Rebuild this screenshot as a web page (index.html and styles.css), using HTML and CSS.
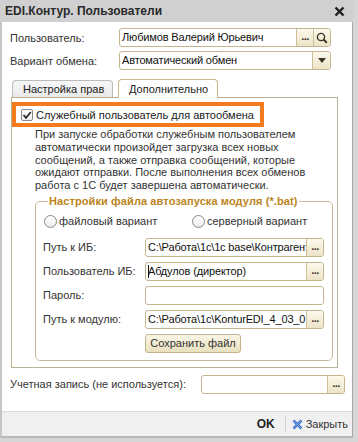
FILE: index.html
```html
<!DOCTYPE html>
<html lang="ru">
<head>
    <meta charset="UTF-8">
    <title>EDI.Контур. Пользователи</title>
    <link rel="stylesheet" href="styles.css">
</head>
<body>
    <div class="window">
        <div class="titlebar">
            <span class="title">EDI.Контур. Пользователи</span>
            <svg class="close" width="11" height="11" viewBox="0 0 11 11">
                <path d="M1.5 1.5 L9.5 9.5 M9.5 1.5 L1.5 9.5" stroke="#1e1e1e" stroke-width="2.4"/>
            </svg>
        </div>

        <div class="content">
            <div class="form-row">
                <span class="label">Пользователь:</span>
                <div class="field main-field">
                    <span class="value">Любимов Валерий Юрьевич</span>
                    <span class="btn-dots">...</span>
                    <span class="btn-icon">
                        <svg width="12" height="12" viewBox="0 0 12 12">
                            <circle cx="5" cy="5" r="3.6" fill="none" stroke="#3b3325" stroke-width="1.4"/>
                            <path d="M7.6 7.6 L10.8 10.8" stroke="#3b3325" stroke-width="2"/>
                        </svg>
                    </span>
                </div>
            </div>
            <div class="form-row">
                <span class="label">Вариант обмена:</span>
                <div class="field main-field">
                    <span class="value">Автоматический обмен</span>
                    <span class="btn-arrow">
                        <svg width="8" height="5" viewBox="0 0 8 5"><path d="M0 0 H8 L4 5 Z" fill="#3b3325"/></svg>
                    </span>
                </div>
            </div>

            <div class="tabs">
                <div class="tab-head">
                    <span class="tab">Настройка прав</span>
                    <span class="tab active">Дополнительно</span>
                </div>
                <div class="tab-panel">
                    <div class="highlight">
                        <span class="checkbox">
                            <svg width="10" height="10" viewBox="0 0 10 10">
                                <path d="M1.5 5 L4 7.8 L8.8 2" fill="none" stroke="#2d2d2d" stroke-width="1.8"/>
                            </svg>
                        </span>
                        Служебный пользователь для автообмена
                    </div>
                    <p class="note">
                        При запуске обработки служебным пользователем<br>
                        автоматически произойдет загрузка всех новых<br>
                        сообщений, а также отправка сообщений, которые<br>
                        ожидают отправки. После выполнения всех обменов<br>
                        работа с 1С будет завершена автоматически.
                    </p>

                    <fieldset class="group">
                        <legend>Настройки файла автозапуска модуля (*.bat)</legend>
                        <div class="radios">
                            <span class="radio-item"><span class="radio"></span>файловый вариант</span>
                            <span class="radio-item"><span class="radio"></span>серверный вариант</span>
                        </div>
                        <div class="group-row">
                            <span class="group-label">Путь к ИБ:</span>
                            <div class="field group-field">
                                <span class="value">C:\Работа\1c\1c base\Контрагенты</span>
                                <span class="btn-dots">...</span>
                            </div>
                        </div>
                        <div class="group-row">
                            <span class="group-label">Пользователь ИБ:</span>
                            <div class="field group-field">
                                <span class="value"><span class="caret"></span>Абдулов (директор)</span>
                                <span class="btn-dots">...</span>
                            </div>
                        </div>
                        <div class="group-row">
                            <span class="group-label">Пароль:</span>
                            <div class="field group-field">
                                <span class="value"></span>
                            </div>
                        </div>
                        <div class="group-row">
                            <span class="group-label">Путь к модулю:</span>
                            <div class="field group-field">
                                <span class="value">C:\Работа\1c\KonturEDI_4_03_0</span>
                                <span class="btn-dots">...</span>
                            </div>
                        </div>
                        <div class="group-row">
                            <span class="group-label"></span>
                            <span class="button">Сохранить файл</span>
                        </div>
                    </fieldset>
                </div>
            </div>

            <div class="form-row account">
                <span class="label account-label">Учетная запись (не используется):</span>
                <div class="field account-field">
                    <span class="value"></span>
                    <span class="btn-dots">...</span>
                </div>
            </div>
        </div>

        <div class="footer">
            <span class="ok">OK</span>
            <span class="sep"></span>
            <span class="close-btn">
                <svg width="11" height="11" viewBox="0 0 11 11">
                    <path d="M1.5 1.5 L9.5 9.5 M9.5 1.5 L1.5 9.5" stroke="#3d72c8" stroke-width="2.6"/>
                    <path d="M1.5 1.5 L9.5 9.5 M9.5 1.5 L1.5 9.5" stroke="#8fb4ec" stroke-width="0.8"/>
                </svg>
                Закрыть
            </span>
        </div>
    </div>
</body>
</html>
```

FILE: styles.css
```css
body {
    margin: 0;
    background: #d6d6d6;
    font-family: "Liberation Sans", Arial, sans-serif;
    font-size: 11px;
    color: #333;
}
.window {
    width: 350px;
    height: 436px;
    background: white;
    border-left: 2px solid #c6c6c6;
    border-right: 1px solid #a9a9a9;
    border-bottom: 2px solid #b8b8b8;
    display: flex;
    flex-direction: column;
}
.titlebar {
    height: 22px;
    background: #d0d0d0;
    display: flex;
    align-items: center;
    justify-content: space-between;
    padding: 0 8px 0 5px;
    margin-left: -2px;
    margin-right: -1px;
}
.title {
    font-weight: bold;
    font-size: 12px;
    color: #2a2a2a;
}
.content {
    flex: 1;
    padding: 6px 7px 0 8px;
}
.form-row {
    display: flex;
    align-items: center;
    height: 19px;
    margin-bottom: 4px;
}
.label {
    width: 109px;
    flex-shrink: 0;
}
.field {
    display: flex;
    height: 19px;
    box-sizing: border-box;
    border: 1px solid #c3b68f;
    border-radius: 3px;
    background: white;
    overflow: hidden;
}
.main-field {
    width: 212px;
}
.value {
    flex: 1;
    min-width: 0;
    padding-left: 2px;
    line-height: 17px;
    color: #111;
    letter-spacing: -0.15px;
    white-space: nowrap;
    overflow: hidden;
    text-overflow: clip;
}
.caret {
    display: inline-block;
    width: 1px;
    height: 13px;
    background: #111;
    vertical-align: -3px;
    margin-right: -1px;
}
.btn-dots, .btn-icon, .btn-arrow {
    width: 16px;
    flex-shrink: 0;
    background: linear-gradient(#fcf9ec, #ece4c6);
    border-left: 1px solid #cdbf96;
    display: flex;
    justify-content: center;
}
.btn-dots {
    font-weight: bold;
    line-height: 15px;
    color: #3b3325;
    letter-spacing: -0.5px;
}
.btn-icon, .btn-arrow {
    align-items: center;
}
.btn-arrow {
    width: 17px;
}
.tabs {
    margin: 10px 7px 0 1px;
}
.tab-head {
    display: flex;
    height: 17px;
    align-items: flex-end;
    padding-left: 1px;
    gap: 5px;
}
.tab {
    height: 17px;
    box-sizing: border-box;
    padding: 2px 0 0 10px;
    width: 101px;
    border: 1px solid #bcbcbc;
    border-bottom: none;
    border-radius: 4px 4px 0 0;
    background: linear-gradient(#f7f7f7, #e9e9e9);
    color: #222;
}
.tab.active {
    width: 100px;
    height: 19px;
    margin-bottom: -1px;
    background: white;
    border-color: #c7b98c;
    padding-top: 3px;
    position: relative;
}
.tab-panel {
    border: 1px solid #bab295;
    padding: 4px 4px 6px 0;
}
.highlight {
    width: 252px;
    height: 25px;
    box-sizing: border-box;
    border: 4px solid #f47a20;
    display: flex;
    align-items: center;
    padding-left: 5px;
    gap: 3px;
    color: #222;
}
.checkbox {
    width: 12px;
    height: 12px;
    box-sizing: border-box;
    border: 1px solid #8a8a8a;
    border-radius: 2px;
    background: linear-gradient(#ffffff, #eeeeee);
    display: flex;
    align-items: center;
    justify-content: center;
}
.note {
    margin: 1px 0 0 23px;
    line-height: 12.8px;
    color: #333;
}
.group {
    margin: 3px 0 0 23px;
    padding: 7px 8px 7px 7px;
    border: 1px solid #c9bd98;
    border-radius: 5px;
    min-width: 0;
}
.group legend {
    padding: 0 1px;
    margin-left: 5px;
    font-weight: bold;
    color: #bb8420;
    line-height: 13px;
    letter-spacing: 0.1px;
}
.radios {
    display: grid;
    grid-template-columns: 148px 1fr;
    height: 13px;
    margin-bottom: 10px;
    padding-left: 1px;
}
.radio-item {
    display: flex;
    align-items: center;
    gap: 2px;
}
.radio {
    width: 13px;
    height: 13px;
    box-sizing: border-box;
    border: 1px solid #8a8a8a;
    border-radius: 50%;
    background: linear-gradient(#ffffff, #ececec);
}
.group-row {
    display: flex;
    align-items: center;
    height: 19px;
    margin-top: 5px;
}
.group-row:first-of-type {
    margin-top: 0;
}
.group-label {
    width: 102px;
    flex-shrink: 0;
}
.group-field {
    width: 185px;
}
.button {
    width: 96px;
    height: 19px;
    box-sizing: border-box;
    border: 1px solid #c1b48c;
    border-radius: 3px;
    background: linear-gradient(#faf6e6, #e9e0bf);
    text-align: center;
    line-height: 17px;
    color: #333;
}
.account {
    margin-top: 7px;
}
.account-label {
    width: 191px;
}
.account-field {
    width: 144px;
}
.footer {
    height: 24px;
    background: #f0f0f0;
    border-top: 1px solid #dcdcdc;
    display: flex;
    align-items: center;
    justify-content: flex-end;
    padding-right: 4px;
}
.ok {
    font-weight: bold;
    font-size: 12px;
    color: #222;
}
.sep {
    width: 1px;
    height: 16px;
    background: #cfcfcf;
    margin: 0 6px 0 10px;
}
.close-btn {
    display: flex;
    align-items: center;
    gap: 3px;
    color: #333;
}
```
